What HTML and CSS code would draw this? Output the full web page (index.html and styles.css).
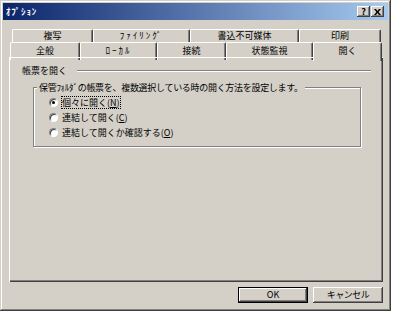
FILE: index.html
```html
<!DOCTYPE html>
<html>
<head>
<meta charset="utf-8">
<link rel="stylesheet" href="styles.css">
</head>
<body>

<div class="window">
  <div class="titlebar">
    <span class="title">ｵﾌﾟｼｮﾝ</span>
    <div class="caption-buttons">
      <span class="cbtn">?</span>
      <span class="cbtn">
        <svg width="7" height="6" viewBox="0 0 7 6"><path d="M0 0h2l1.5 2 1.5-2h2l-2.5 3 2.5 3h-2l-1.5-2-1.5 2h-2l2.5-3z" fill="#000"/></svg>
      </span>
    </div>
  </div>

  <div class="tabs">
    <div class="tab-row back">
      <div class="tab">複写</div>
      <div class="tab"><span class="kana">ﾌｧｲﾘﾝｸﾞ</span></div>
      <div class="tab">書込不可媒体</div>
      <div class="tab">印刷</div>
    </div>
    <div class="tab-row front">
      <div class="tab">全般</div>
      <div class="tab"><span class="kana">ﾛｰｶﾙ</span></div>
      <div class="tab">接続</div>
      <div class="tab">状態監視</div>
      <div class="tab selected">開く</div>
    </div>
  </div>

  <div class="panel">
    <div class="section-head">
      <span>帳票を開く</span>
      <div class="etched-line"></div>
    </div>

    <div class="group">
      <span class="group-label">保管ﾌｫﾙﾀﾞの帳票を、複数選択している時の開く方法を設定します。</span>
      <div class="radio-row">
        <span class="radio checked"></span>
        <span class="focus">個々に開く(<u>N</u>)</span>
      </div>
      <div class="radio-row">
        <span class="radio"></span>
        <span>連結して開く(<u>C</u>)</span>
      </div>
      <div class="radio-row">
        <span class="radio"></span>
        <span>連結して開くか確認する(<u>O</u>)</span>
      </div>
    </div>
  </div>

  <div class="buttons">
    <div class="btn default">OK</div>
    <div class="btn cancel">キャンセル</div>
  </div>
</div>

</body>
</html>
```

FILE: styles.css
```css
* {
  box-sizing: border-box;
}
body {
  margin: 0;
  background: #fff;
  font-family: "Noto Sans CJK JP", sans-serif;
  font-size: 9px;
  color: #000;
}
.window {
  width: 391px;
  height: 311px;
  padding: 3px 3px 0;
  background: #d4d0c8;
  display: flex;
  flex-direction: column;
  box-shadow: inset -1px -1px #404040, inset 1px 1px #d4d0c8,
              inset -2px -2px #808080, inset 2px 2px #fff;
}
.titlebar {
  height: 17px;
  padding: 0 4px 0 3px;
  display: flex;
  align-items: center;
  justify-content: space-between;
  background: linear-gradient(to right, #0a246a, #a6caf0);
}
.title {
  color: #fff;
  font-weight: bold;
  line-height: 11px;
  letter-spacing: 0.8px;
}
.caption-buttons {
  display: flex;
  gap: 1px;
}
.cbtn {
  width: 13px;
  height: 11px;
  background: #d4d0c8;
  display: flex;
  align-items: center;
  justify-content: center;
  font-weight: bold;
  line-height: 9px;
  box-shadow: inset -1px -1px #404040, inset 1px 1px #fff, inset -2px -2px #808080;
}

/* tabs */
.tabs {
  margin-top: 9px;
}
.tab-row {
  display: grid;
}
.tab-row.back {
  height: 13px;
  margin-left: 9px;
  grid-template-columns: 81px 97px 109px 82px;
}
.tab-row.front {
  height: 15px;
  margin-left: 7px;
  grid-template-columns: 70px 77px 69px 87px 69px;
  align-items: end;
}
.tab {
  height: 100%;
  text-align: center;
  line-height: 12px;
  border-top: 1px solid #fff;
  border-left: 1px solid #fff;
  border-right: 1px solid #404040;
  border-radius: 2px 2px 0 0;
  box-shadow: inset -1px 0 #808080;
  background: #d4d0c8;
}
.tab .kana {
  letter-spacing: 2px;
}
.tab-row.front .tab {
  padding-top: 2px;
}
.tab.selected {
  height: 19px;
  margin-bottom: -1px;
  padding-top: 2px;
  position: relative;
  z-index: 1;
}

/* panel */
.panel {
  height: 225px;
  margin: 0 5px 0 6px;
  box-shadow: inset 1px 1px #fff, inset -1px -1px #404040, inset -2px -2px #808080;
}
.section-head {
  display: flex;
  align-items: center;
  padding: 8px 12px 0 13px;
  line-height: 11px;
}
.etched-line {
  flex: 1;
  height: 2px;
  margin-left: 10px;
  border-top: 1px solid #808080;
  border-bottom: 1px solid #fff;
}
.group {
  height: 60px;
  margin: 11px 22px 0 24px;
  padding-left: 15px;
  border: 1px solid #808080;
  box-shadow: 1px 1px 0 #fff, inset 1px 1px 0 #fff;
}
.group-label {
  display: block;
  width: max-content;
  margin: -6px 0 2px -12px;
  padding: 0 2px;
  line-height: 11px;
  letter-spacing: -0.3px;
  background: #d4d0c8;
}
.radio-row {
  display: flex;
  align-items: center;
  height: 15px;
  line-height: 11px;
}
.radio {
  width: 9px;
  height: 9px;
  margin-right: 4px;
  border-radius: 50%;
  background: #fff;
  border: 1px solid;
  border-color: #808080 #fff #fff #808080;
  box-shadow: inset 1px 1px #404040;
  display: flex;
  align-items: center;
  justify-content: center;
}
.radio.checked::after {
  content: "";
  width: 3px;
  height: 3px;
  border-radius: 50%;
  background: #000;
}
.focus {
  outline: 1px dotted #000;
  outline-offset: 0;
}

/* buttons */
.buttons {
  display: flex;
  justify-content: flex-end;
  gap: 5px;
  margin-top: 5px;
  padding-right: 5px;
}
.btn {
  width: 70px;
  height: 16px;
  line-height: 16px;
  text-align: center;
  background: #d4d0c8;
  box-shadow: inset -1px -1px #404040, inset 1px 1px #fff, inset -2px -2px #808080;
}
.btn.default {
  border: 1px solid #000;
  line-height: 14px;
}
.btn.cancel {
  letter-spacing: -0.5px;
}
```
